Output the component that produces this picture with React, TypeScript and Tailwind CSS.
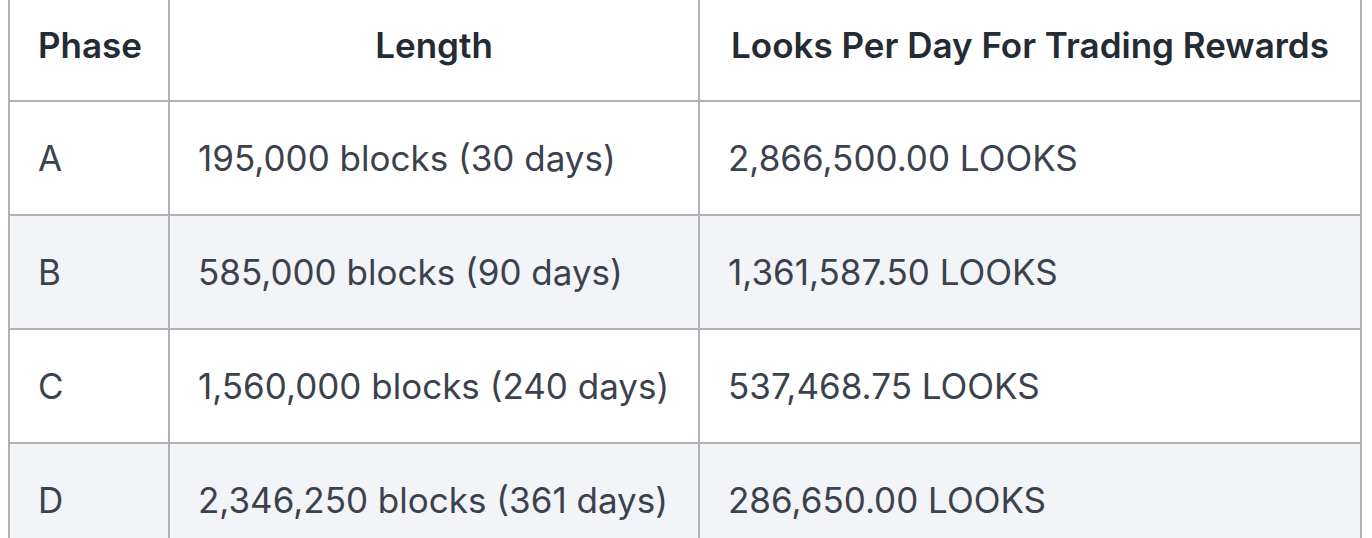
const rows: { phase: string; length: string; looks: string }[] = [
  { phase: "A", length: "195,000 blocks (30 days)", looks: "2,866,500.00 LOOKS" },
  { phase: "B", length: "585,000 blocks (90 days)", looks: "1,361,587.50 LOOKS" },
  { phase: "C", length: "1,560,000 blocks (240 days)", looks: "537,468.75 LOOKS" },
  { phase: "D", length: "2,346,250 blocks (361 days)", looks: "286,650.00 LOOKS" },
];

export default function App() {
  return (
    <div className="w-[1372px] h-[538px] overflow-hidden bg-white font-['Inter',sans-serif]">
      <table className="ml-[8px] -mt-[12px] w-[1352px] table-fixed border-collapse">
        <colgroup>
          <col className="w-[160px]" />
          <col className="w-[530px]" />
          <col className="w-[662px]" />
        </colgroup>
        <thead>
          <tr className="h-[112px]">
            <th className="border-2 border-[#aeb1b6] px-[28px] text-center text-[35px] font-semibold text-[#232b35]">Phase</th>
            <th className="border-2 border-[#aeb1b6] px-[28px] text-center text-[35px] font-semibold text-[#232b35]">Length</th>
            <th className="border-2 border-[#aeb1b6] px-[28px] text-center text-[35px] font-semibold text-[#232b35] whitespace-nowrap">
              Looks Per Day For Trading Rewards
            </th>
          </tr>
        </thead>
        <tbody>
          {rows.map((row, i) => (
            <tr key={row.phase} className={`h-[114px] ${i % 2 === 1 ? "bg-[#f3f4f7]" : "bg-white"}`}>
              <td className="border-2 border-[#aeb1b6] px-[28px] text-[35px] text-[#3b424d]">{row.phase}</td>
              <td className="border-2 border-[#aeb1b6] px-[28px] text-[35px] text-[#3b424d] whitespace-nowrap">{row.length}</td>
              <td className="border-2 border-[#aeb1b6] px-[28px] text-[35px] text-[#3b424d] whitespace-nowrap">{row.looks}</td>
            </tr>
          ))}
        </tbody>
      </table>
    </div>
  );
}
